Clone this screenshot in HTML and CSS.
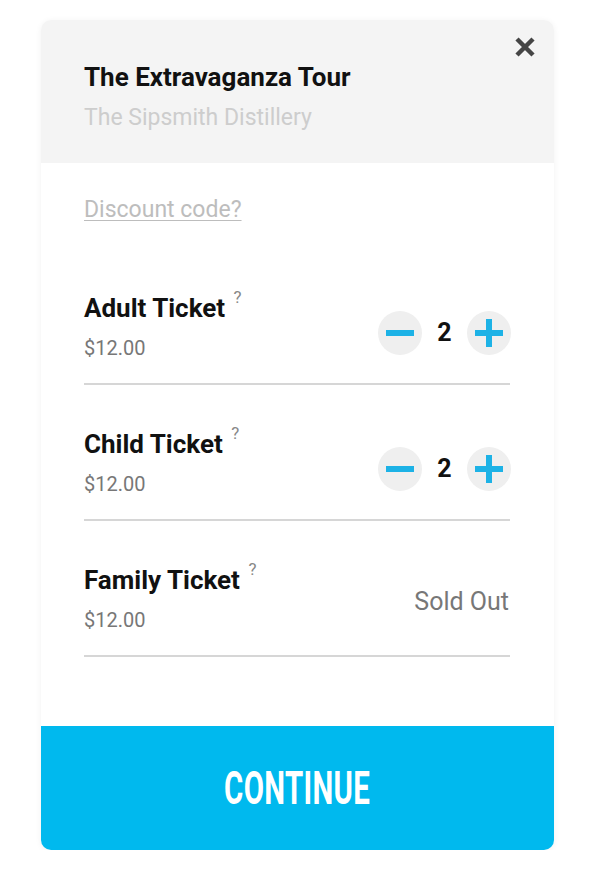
FILE: index.html
```html
<!DOCTYPE html>
<html lang="en">
<head>
  <meta charset="UTF-8">
  <meta name="viewport" content="width=device-width, initial-scale=1.0">
  <title>Tickets</title>
  <link rel="stylesheet" href="styles.css">
</head>
<body>
  <div class="card">
    <div class="card-head">
      <button class="close" aria-label="Close">
        <svg width="22" height="22" viewBox="0 0 22 22"><path d="M3 3 L19 19 M19 3 L3 19" stroke="#454545" stroke-width="4.5" stroke-linecap="butt"/></svg>
      </button>
      <h1 class="title">The Extravaganza Tour</h1>
      <div class="venue">The Sipsmith Distillery</div>
    </div>

    <div class="card-body">
      <a class="discount" href="#">Discount code?</a>

      <!-- ticket rows -->
      <div class="ticket">
        <div class="ticket-info">
          <div class="ticket-name">Adult Ticket <sup>?</sup></div>
          <div class="ticket-price">$12.00</div>
        </div>
        <div class="stepper">
          <button class="step"><span class="bar"></span></button>
          <span class="qty">2</span>
          <button class="step"><span class="bar"></span><span class="bar vert"></span></button>
        </div>
      </div>

      <div class="ticket">
        <div class="ticket-info">
          <div class="ticket-name">Child Ticket <sup>?</sup></div>
          <div class="ticket-price">$12.00</div>
        </div>
        <div class="stepper">
          <button class="step"><span class="bar"></span></button>
          <span class="qty">2</span>
          <button class="step"><span class="bar"></span><span class="bar vert"></span></button>
        </div>
      </div>

      <div class="ticket">
        <div class="ticket-info">
          <div class="ticket-name">Family Ticket <sup>?</sup></div>
          <div class="ticket-price">$12.00</div>
        </div>
        <div class="sold-out">Sold Out</div>
      </div>
    </div>

    <button class="continue"><span>CONTINUE</span></button>
  </div>
</body>
</html>
```

FILE: styles.css
```css
body {
  margin: 0;
  background: #fff;
  font-family: 'Roboto', 'Liberation Sans', sans-serif;
  color: #111;
}
.card {
  width: 513px;
  margin: 20px 0 0 41px;
  border-radius: 10px;
  background: #fff;
  box-shadow: 0 1px 6px rgba(0,0,0,0.06);
  overflow: hidden;
}
.card-head {
  position: relative;
  background: #f4f4f4;
  height: 143px;
  box-sizing: border-box;
  padding: 41px 43px 0;
}
.close {
  position: absolute;
  top: 16px;
  right: 18px;
  border: none;
  background: none;
  padding: 0;
  width: 22px;
  height: 22px;
}
.title {
  margin: 0;
  font-size: 26px;
  line-height: 32px;
  font-weight: 700;
  color: #111;
}
.venue {
  margin-top: 11px;
  font-size: 23px;
  line-height: 28px;
  color: #cdcdcd;
}
.card-body {
  padding: 33px 44px 69px 43px;
}
.discount {
  display: inline-block;
  font-size: 23px;
  line-height: 28px;
  color: #bdbdbd;
  text-decoration: underline;
  text-underline-offset: 3px;
  text-decoration-thickness: 1px;
  margin-bottom: 69px;
}
.ticket {
  display: flex;
  justify-content: space-between;
  align-items: center;
  padding: 44px 0 23px;
  border-bottom: 2px solid #d6d6d6;
}
.ticket:first-of-type {
  padding-top: 0;
}
.ticket-name {
  font-size: 26px;
  line-height: 30px;
  font-weight: 700;
  color: #111;
}
.ticket-name sup {
  font-size: 17px;
  line-height: 0;
  font-weight: 400;
  color: #888;
  vertical-align: 14px;
  margin-left: 2px;
}
.ticket-price {
  margin-top: 13px;
  font-size: 20px;
  line-height: 24px;
  color: #777;
}
.stepper {
  display: flex;
  align-items: center;
  margin-top: 12px;
  margin-right: -1px;
}
.step {
  position: relative;
  width: 44px;
  height: 44px;
  border-radius: 50%;
  border: none;
  background: #efefef;
  padding: 0;
}
.bar {
  position: absolute;
  left: 8px;
  top: 19px;
  width: 28px;
  height: 6px;
  background: #1db2e6;
}
.bar.vert {
  left: 19px;
  top: 8px;
  width: 6px;
  height: 28px;
}
.qty {
  width: 45px;
  text-align: center;
  font-size: 25px;
  font-weight: 700;
  color: #111;
}
.sold-out {
  margin-top: 5px;
  font-size: 25px;
  color: #777;
  margin-right: 1px;
}
.continue {
  display: block;
  width: 100%;
  height: 124px;
  border: none;
  background: #00b9ee;
  color: #fff;
  padding: 0;
}
.continue span {
  display: inline-block;
  font-family: 'Roboto', sans-serif;
  font-weight: 700;
  font-size: 46px;
  letter-spacing: 0.5px;
  transform: scaleX(0.64);
}
```
